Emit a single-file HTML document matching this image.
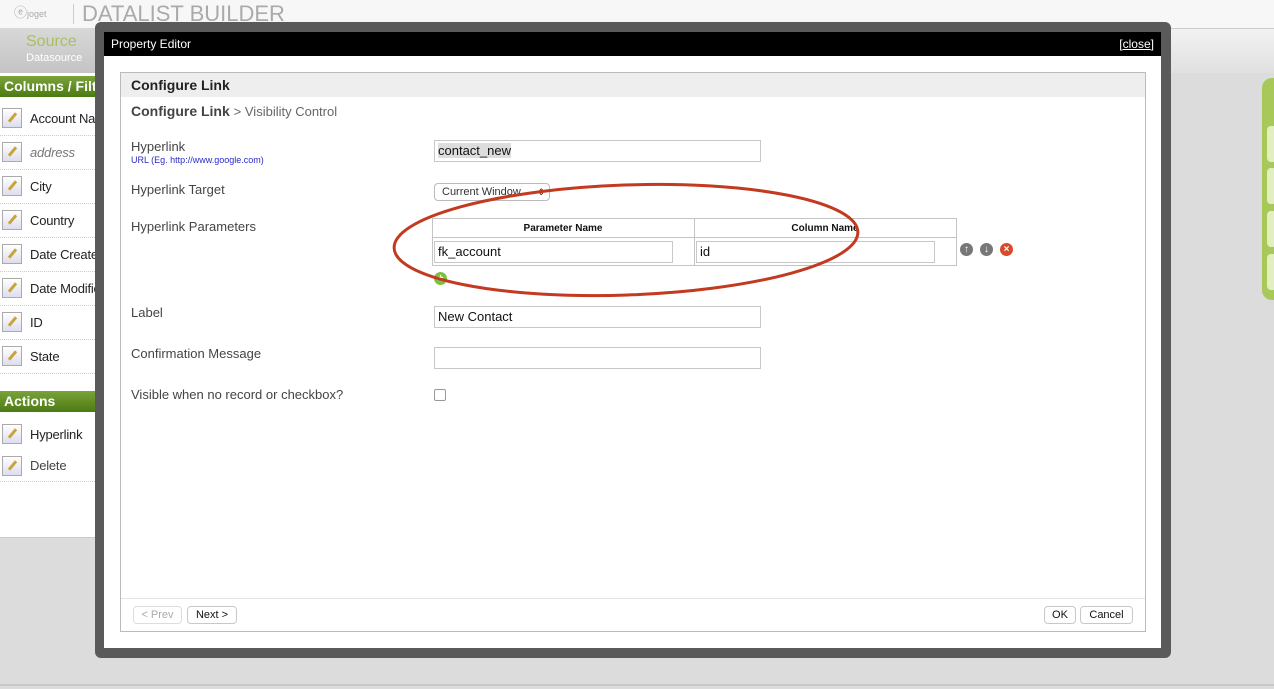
<!DOCTYPE html>
<html><head><meta charset="utf-8"><style>
*{box-sizing:border-box;margin:0;padding:0}
body{width:1274px;height:689px;position:relative;overflow:hidden;background:#dcdcdc;font-family:"Liberation Sans",sans-serif;font-size:13px;color:#333}
.a{position:absolute}
.item{position:absolute;left:0;width:105px;height:34px;border-bottom:1px dotted #ccc;background:#fff;font-size:13px;color:#222;line-height:34px;padding-left:30px;white-space:nowrap;overflow:hidden;letter-spacing:-0.2px}
.item i{position:absolute;left:2px;top:6px;width:20px;height:20px;border:1px solid #aaa;background:linear-gradient(#fff,#dde);}
.item i:after{content:"";position:absolute;left:8px;top:3px;width:3px;height:11px;background:#c9a23a;transform:rotate(40deg)}
.gh{position:absolute;left:0;width:105px;height:21px;background:linear-gradient(#7aa33a,#4c7a12);color:#fff;font-weight:bold;font-size:14px;line-height:21px;padding-left:4px;white-space:nowrap;overflow:hidden}
.lbl{position:absolute;left:131px;font-size:13px;color:#444}
.inp{position:absolute;border:1px solid #c8c8c8;background:#fff;height:22px;font-size:13px;line-height:20px;padding-left:3px;color:#111}
.btn{position:absolute;border:1px solid #c8c8c8;border-radius:4px;background:#fff;height:18px;font-size:11px;line-height:16px;text-align:center;color:#111}
.ic{position:absolute;width:13px;height:13px;border-radius:50%;color:#fff;font-size:10px;line-height:13px;text-align:center;font-weight:bold}
</style></head><body>
<div class="a" style="left:0;top:0;width:1274px;height:28px;background:#f7f7f7"></div>
<div class="a" style="left:14px;top:2px;font-size:13px;color:#aaa">ⓔ<span style="font-size:9px">joget</span></div>
<div class="a" style="left:73px;top:4px;width:1px;height:20px;background:#ccc"></div>
<div class="a" style="left:82px;top:1px;font-size:22px;color:#aaa">DATALIST BUILDER</div>
<div class="a" style="left:0;top:28px;width:1274px;height:45px;background:linear-gradient(#f2f2f2,#e0e0e0);border-top:1px solid #ccc"></div>
<div class="a" style="left:0;top:28px;width:110px;height:45px;background:linear-gradient(#d8d8d8,#c4c4c4)"></div>
<div class="a" style="left:26px;top:33px;font-size:16px;color:#a8c060">Source</div>
<div class="a" style="left:26px;top:52px;font-size:11px;color:#fff">Datasource</div>
<div class="a" style="left:0;top:73px;width:105px;height:465px;background:#fff;border-bottom:1px solid #ccc"></div>
<div class="gh" style="top:76px">Columns / Filter</div>
<div class="item" style="top:102px"><i></i>Account Name</div>
<div class="item" style="top:136px;font-style:italic;color:#777"><i></i>address</div>
<div class="item" style="top:170px"><i></i>City</div>
<div class="item" style="top:204px"><i></i>Country</div>
<div class="item" style="top:238px"><i></i>Date Created</div>
<div class="item" style="top:272px"><i></i>Date Modified</div>
<div class="item" style="top:306px"><i></i>ID</div>
<div class="item" style="top:340px"><i></i>State</div>
<div class="gh" style="top:391px">Actions</div>
<div class="item" style="top:418px"><i></i>Hyperlink</div>
<div class="item" style="top:450px;height:32px;line-height:32px;color:#444"><i></i>Delete</div>
<div class="a" style="left:1262px;top:78px;width:20px;height:222px;border-radius:10px 0 0 10px;background:#a8c85a"></div>
<div class="a" style="left:1267px;top:126px;width:10px;height:36px;border-radius:4px;background:#e2f0c0"></div>
<div class="a" style="left:1267px;top:168px;width:10px;height:36px;border-radius:4px;background:#e2f0c0"></div>
<div class="a" style="left:1267px;top:211px;width:10px;height:36px;border-radius:4px;background:#e2f0c0"></div>
<div class="a" style="left:1267px;top:254px;width:10px;height:36px;border-radius:4px;background:#e2f0c0"></div>
<div class="a" style="left:0;top:684px;width:1274px;height:2px;background:#c8c8c8"></div>

<div class="a" style="left:95px;top:22px;width:1076px;height:636px;background:#5a5a5a;border-radius:6px"></div>
<div class="a" style="left:104px;top:32px;width:1057px;height:616px;background:#fff"></div>
<div class="a" style="left:104px;top:32px;width:1057px;height:24px;background:#000;color:#fff;font-size:12px;line-height:24px;padding-left:7px">Property Editor<span style="position:absolute;right:7px">[<u>close</u>]</span></div>
<div class="a" style="left:120px;top:72px;width:1026px;height:560px;border:1px solid #bbb"></div>
<div class="a" style="left:121px;top:73px;width:1024px;height:24px;background:#eee;font-weight:bold;font-size:14px;line-height:24px;padding-left:10px;color:#222">Configure Link</div>
<div class="a" style="left:131px;top:103px;font-size:14px;color:#666"><b style="color:#444">Configure Link</b> <span style="font-size:13px">&gt; Visibility Control</span></div>
<div class="lbl" style="top:139px">Hyperlink</div>
<div class="a" style="left:131px;top:155px;font-size:9px;color:#2a2acc">URL (Eg. http://www.google.com)</div>
<div class="inp" style="left:434px;top:140px;width:327px"><span style="background:#ddd">contact_new</span></div>
<div class="lbl" style="top:182px">Hyperlink Target</div>
<div class="a" style="left:434px;top:183px;width:116px;height:18px;border:1px solid #bbb;border-radius:4px;font-size:11px;line-height:16px;padding-left:7px">Current Window <span style="position:absolute;right:4px;font-size:9px">⇕</span></div>
<div class="lbl" style="top:219px">Hyperlink Parameters</div>
<div class="a" style="left:432px;top:218px;width:525px;height:48px;border:1px solid #c4c4c4"></div>
<div class="a" style="left:694px;top:218px;width:1px;height:48px;background:#c4c4c4"></div>
<div class="a" style="left:432px;top:237px;width:525px;height:1px;background:#c4c4c4"></div>
<div class="a" style="left:432px;top:223px;width:262px;text-align:center;font-size:10px;font-weight:bold;color:#111">Parameter Name</div>
<div class="a" style="left:694px;top:223px;width:262px;text-align:center;font-size:10px;font-weight:bold;color:#111">Column Name</div>
<div class="inp" style="left:434px;top:241px;width:239px">fk_account</div>
<div class="inp" style="left:696px;top:241px;width:239px">id</div>
<div class="ic" style="left:960px;top:243px;background:#777">↑</div>
<div class="ic" style="left:980px;top:243px;background:#777">↓</div>
<div class="ic" style="left:1000px;top:243px;background:#d84a2a">×</div>
<div class="ic" style="left:434px;top:272px;background:#7cc040">+</div>
<div class="lbl" style="top:305px">Label</div>
<div class="inp" style="left:434px;top:306px;width:327px">New Contact</div>
<div class="lbl" style="top:346px">Confirmation Message</div>
<div class="inp" style="left:434px;top:347px;width:327px"></div>
<div class="lbl" style="top:387px">Visible when no record or checkbox?</div>
<div class="a" style="left:434px;top:389px;width:12px;height:12px;border:1px solid #999;border-radius:2px"></div>
<div class="a" style="left:121px;top:598px;width:1024px;height:1px;background:#e4e4e4"></div>
<div class="btn" style="left:133px;top:606px;width:49px;color:#aaa;border-color:#ddd">&lt; Prev</div>
<div class="btn" style="left:187px;top:606px;width:50px">Next &gt;</div>
<div class="btn" style="left:1044px;top:606px;width:32px">OK</div>
<div class="btn" style="left:1080px;top:606px;width:53px">Cancel</div>
<svg class="a" style="left:0;top:0" width="1274" height="689"><ellipse cx="626" cy="240" rx="232" ry="55" transform="rotate(-2 626 240)" fill="none" stroke="#c23a20" stroke-width="3"/></svg>
</body></html>
